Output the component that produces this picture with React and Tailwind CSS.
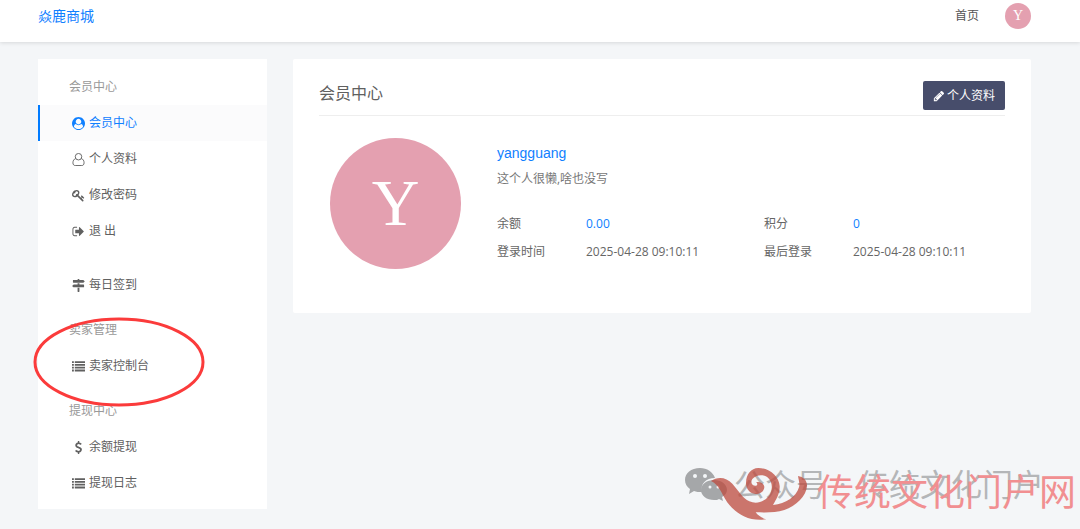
import React from 'react';

const icons = {
    userCircle: 'M1523 1339q-22-155-87.500-257.500t-184.500-118.500q-67 74-159.500 115.500t-195.500 41.500-195.500-41.500-159.500-115.500q-119 16-184.500 118.500t-87.500 257.500q106 150 271 237.500t356 87.500 356-87.500 271-237.500zm-243-699q0-159-112.500-271.500t-271.500-112.500-271.500 112.500-112.500 271.500 112.500 271.500 271.500 112.500 271.500-112.500 112.500-271.500zm512 256q0 182-71 347.500t-190.500 286-285.500 191.500-349 71-348-71-286-191-191-286-71-348 71-348 191-286 286-191 348-71 348 71 286 191 191 286 71 348z',
    key: 'M832 512q0-80-56-136t-136-56-136 56-56 136q0 42 19 83-41-19-83-19-80 0-136 56t-56 136 56 136 136 56 136-56 56-136q0-42-19-83 41 19 83 19 80 0 136-56t56-136zm851 704q0 17-49 66t-66 49q-9 0-28.500-16t-36.500-33-38.500-40-24.500-26l-96 96 220 220q28 28 28 68 0 42-39 81t-81 39q-40 0-68-28l-671-671q-176 131-365 131-163 0-265.500-102.500t-102.500-265.500q0-160 95-313t248-248 313-95q163 0 265.500 102.500t102.500 265.500q0 189-131 365l355 355 96-96q-3-3-26-24.500t-40-38.500-33-36.500-16-28.500q0-17 49-66t66-49q13 0 23 10 6 6 46 44.500t82 79.500 86.500 86 73 78 28.500 41z',
    signOut: 'M704 1440q0 4 1 20t.5 26.500-3 23.500-10 19.500-20.500 6.500h-320q-119 0-203.500-84.500t-84.500-203.500v-704q0-119 84.500-203.500t203.500-84.500h320q13 0 22.500 9.500t9.500 22.500q0 4 1 20t.5 26.500-3 23.500-10 19.500-20.500 6.500h-320q-66 0-113 47t-47 113v704q0 66 47 113t113 47h312l11.500 1 11.500 3 8 5.500 7 9 2 13.500zm928-544q0 26-19 45l-544 544q-19 19-45 19t-45-19-19-45v-288h-448q-26 0-45-19t-19-45v-384q0-26 19-45t45-19h448v-288q0-26 19-45t45-19 45 19l544 544q19 19 19 45z',
    signs: 'M1745 297q10 10 10 23t-10 23l-141 141q-28 28-68 28h-1344q-26 0-45-19t-19-45v-256q0-26 19-45t45-19h576v-64q0-26 19-45t45-19h128q26 0 45 19t19 45v64h512q40 0 68 28zm-977 919h256v512q0 26-19 45t-45 19h-128q-26 0-45-19t-19-45v-512zm832-448q26 0 45 19t19 45v256q0 26-19 45t-45 19h-1344q-40 0-68-28l-141-141q-10-10-10-23t10-23l141-141q28-28 68-28h512v-192h256v192h576z',
    list: 'M0 160h256v256H0zM384 160h1408v256H384zM0 544h256v256H0zM384 544h1408v256H384zM0 928h256v256H0zM384 928h1408v256H384zM0 1312h256v256H0zM384 1312h1408v256H384z',
    dollar: 'M1362 1185q0 153-99.500 263.500t-258.500 136.500v175q0 14-9 23t-23 9h-135q-13 0-22.500-9.500t-9.500-22.500v-175q-66-9-127.500-31t-101.500-44.500-74-48-46.500-37.500-17.500-18q-17-21-2-41l103-135q7-10 23-12 15-2 24 9l2 2q113 99 243 125 37 8 74 8 81 0 142.500-43t61.500-122q0-28-15-53t-33.500-42-58.500-37.500-66-32-80-32.500q-39-16-61.500-25t-61.500-26.500-62.500-31-56.500-35.500-53.500-42.500-43.500-49-35.500-58-21-66.500-8.500-78q0-138 98-242t255-134v-180q0-13 9.500-22.500t22.500-9.500h135q14 0 23 9t9 23v176q57 6 110.500 23t87 33.500 63.500 37.500 39 29 15 14q17 18 5 38l-81 146q-8 15-23 16-14 3-27-7-3-3-14.500-12t-39-26.500-58.500-32-74.500-26-85.500-11.500q-95 0-155 43t-60 111q0 26 8.500 48t29.500 41.500 39.500 33 56 31 60.500 27 70 27.500q53 20 81 31.500t76 35 75.500 42.500 62 50 53 63.500 31.500 76.500 13 94z',
    pencil: 'M491 1536l91-91-235-235-91 91v107h128v128h107zm523-928q0-22-22-22-10 0-17 7l-542 542q-7 7-7 17 0 22 22 22 10 0 17-7l542-542q7-7 7-17zm-54-192l416 416-832 832h-416v-416zm683 96q0 53-37 90l-166 166-416-416 166-165q36-38 90-38 53 0 91 38l235 234q37 39 37 91z',
};

function Icon({ name, className }) {
    if (name === 'user') {
        return (
            <svg viewBox="0 0 28 28" className={className} aria-hidden="true" fill="none" stroke="currentColor" strokeWidth="2">
                <circle cx="14" cy="8" r="7" />
                <path d="M8 12c-4 1-6 5-6 9c0 4 2 6 5 6h14c3 0 5-2 5-6c0-4-2-8-6-9" />
            </svg>
        );
    }
    return (
        <svg viewBox="0 0 1792 1792" className={className} fill="currentColor" fillRule="evenodd" aria-hidden="true">
            <path d={icons[name]} />
        </svg>
    );
}

const menu = [
    {
        title: '会员中心',
        items: [
            { label: '会员中心', icon: 'userCircle', active: true },
            { label: '个人资料', icon: 'user' },
            { label: '修改密码', icon: 'key' },
            { label: '退 出', icon: 'signOut' },
        ],
    },
    { items: [{ label: '每日签到', icon: 'signs' }] },
    { title: '卖家管理', items: [{ label: '卖家控制台', icon: 'list' }] },
    {
        title: '提现中心',
        items: [
            { label: '余额提现', icon: 'dollar' },
            { label: '提现日志', icon: 'list' },
        ],
    },
];

const stats = [
    { label: '余额', value: '0.00', link: true },
    { label: '积分', value: '0', link: true },
    { label: '登录时间', value: '2025-04-28 09:10:11' },
    { label: '最后登录', value: '2025-04-28 09:10:11' },
];

function Header() {
    return (
        <header className="h-[42px] bg-white shadow-[0_1px_4px_rgba(0,0,0,0.12)]">
            <div className="mr-[49px] ml-[38px] flex h-8 items-center justify-between">
                <a href="#" className="text-sm text-[#1080ff]">焱鹿商城</a>
                <nav className="flex items-center gap-[26px]">
                    <a href="#" className="text-xs text-[#555]">首页</a>
                    <a href="#" className="flex size-[26px] items-center justify-center rounded-full bg-[#e4a0b0] font-['Liberation_Serif',serif] text-sm text-white">
                        Y
                    </a>
                </nav>
            </div>
        </header>
    );
}

function Sidebar() {
    return (
        <aside className="relative w-[229px] shrink-0 bg-white pt-[10px] pb-2">
            {menu.map((group, i) => (
                <section key={i} className={i > 0 ? 'mt-[18px]' : ''}>
                    {group.title && <h2 className={i > 0 ? '-mt-[9px] h-9 pl-[31px] text-xs leading-9 text-[#999]' : 'h-9 pl-[31px] text-xs leading-9 text-[#999]'}>{group.title}</h2>}
                    <ul>
                        {group.items.map((item) => (
                            <li key={item.label}>
                                <a
                                    href="#"
                                    className={
                                        item.active
                                            ? 'flex h-9 items-center gap-1 border-l-2 border-[#007bff] bg-[#fbfbfc] pl-8 text-xs text-[#1080ff]'
                                            : 'flex h-9 items-center gap-1 border-l-2 border-transparent pl-8 text-xs text-[#606060]'
                                    }
                                >
                                    <Icon name={item.icon} className="size-[13px]" />
                                    {item.label}
                                </a>
                            </li>
                        ))}
                    </ul>
                </section>
            ))}

            {/* Red marker around the seller menu */}
            <svg className="pointer-events-none absolute top-[257px] -left-[5px] h-[92px] w-[172px]" viewBox="0 0 172 92" aria-hidden="true">
                <ellipse cx="86" cy="46" rx="84" ry="43" fill="none" stroke="#fb3b3b" strokeWidth="3" />
            </svg>
        </aside>
    );
}

function Profile() {
    return (
        <main className="h-[254px] flex-1 rounded-xs bg-white px-[26px] pt-[22px]">
            <div className="flex h-[35px] items-start justify-between border-b border-[#eee]">
                <h1 className="text-base text-[#606060]">会员中心</h1>
                <button type="button" className="flex h-[29px] items-center gap-[2px] rounded-xs bg-[#474d6b] px-[10px] text-xs text-white">
                    <Icon name="pencil" className="size-[12px]" />
                    个人资料
                </button>
            </div>
            <div className="flex gap-9 pt-[22px] pl-[11px]">
                <div className="flex size-[131px] shrink-0 items-center justify-center rounded-full bg-[#e4a0b0] pb-[2px] font-['Liberation_Serif',serif] text-[66px] text-white">
                    Y
                </div>
                <div className="flex-1 pt-[5px]">
                    <a href="#" className="block font-['Liberation_Sans',sans-serif] text-sm text-[#1080ff]">yangguang</a>
                    <p className="mt-2 text-xs leading-4 text-[#777]">这个人很懒,啥也没写</p>
                    <dl className="mt-[23px] grid grid-cols-[89px_178px_89px_1fr] text-xs leading-7 text-[#666]">
                        {stats.map((s) => (
                            <React.Fragment key={s.label}>
                                <dt>{s.label}</dt>
                                <dd>{s.link ? <a href="#" className="text-[#1080ff]">{s.value}</a> : s.value}</dd>
                            </React.Fragment>
                        ))}
                    </dl>
                </div>
            </div>
        </main>
    );
}

function Watermark() {
    return (
        <div className="pointer-events-none absolute right-0 bottom-0 h-[70px] w-[400px]" aria-hidden="true">
            <svg className="absolute top-[6px] left-[4px] h-[40px] w-[43px]" viewBox="0 0 43 40" fill="#a5a7a9">
                <path d="M16 3C7 3 1 8 1 15c0 4 2 7 5 9l-1 5 5-3c2 1 5 1 8 1C16 19 22 13 31 13C29 7 23 3 16 3z" />
                <path d="M30 15c-7 0-13 4-13 10s6 10 13 10c2 0 4 0 5-1l4 2-1-4c3-2 5-4 5-7c0-6-6-10-13-10z" />
                <g fill="#f4f6f8">
                    <circle cx="11" cy="11" r="2" />
                    <circle cx="21" cy="11" r="2" />
                    <circle cx="26" cy="22" r="1.500" />
                    <circle cx="34" cy="22" r="1.500" />
                </g>
            </svg>
            <p className="absolute top-[2px] left-[54px] flex text-[31px] leading-[46px] whitespace-nowrap text-[#b4b6b8]">
                公众号<span className="w-[31px] text-center">·</span>传统文化门户
            </p>
            {/* Phoenix mark */}
            <svg className="absolute top-[6px] left-[30px] h-[56px] w-[98px]" viewBox="120 45 294 168" fill="#bd4a3e" fillOpacity="0.750">
                <path d="M123 93C142 79 168 80 187 101C204 120 218 145 238 154C259 163 282 156 296 139C309 122 309 97 294 83C282 72 258 73 247 87C240 98 247 108 258 107C263 106 263 99 258 97C270 94 283 101 283 112C282 125 270 132 257 132C239 131 227 116 228 98C229 72 243 55 265 54C299 54 327 79 329 108C330 131 319 147 309 165C348 161 378 141 387 112C390 101 386 90 384 78C400 80 412 92 411 108C409 139 378 168 343 180C316 189 286 187 257 187C264 197 275 204 289 208C240 215 205 195 179 166C158 143 150 103 123 93z" />
            </svg>
            <p className="absolute top-[9px] left-[137px] text-[37px] leading-[48px] whitespace-nowrap text-[#f18f91]">传统文化门户网</p>
        </div>
    );
}

export default function App() {
    return (
        <div className="relative min-h-screen bg-[#f4f6f8] font-['Open_Sans','Noto_Sans_CJK_SC',sans-serif]">
            <Header />
            <div className="mt-[17px] mr-[49px] ml-[38px] flex items-start gap-[26px]">
                <Sidebar />
                <Profile />
            </div>
            <Watermark />
        </div>
    );
}
